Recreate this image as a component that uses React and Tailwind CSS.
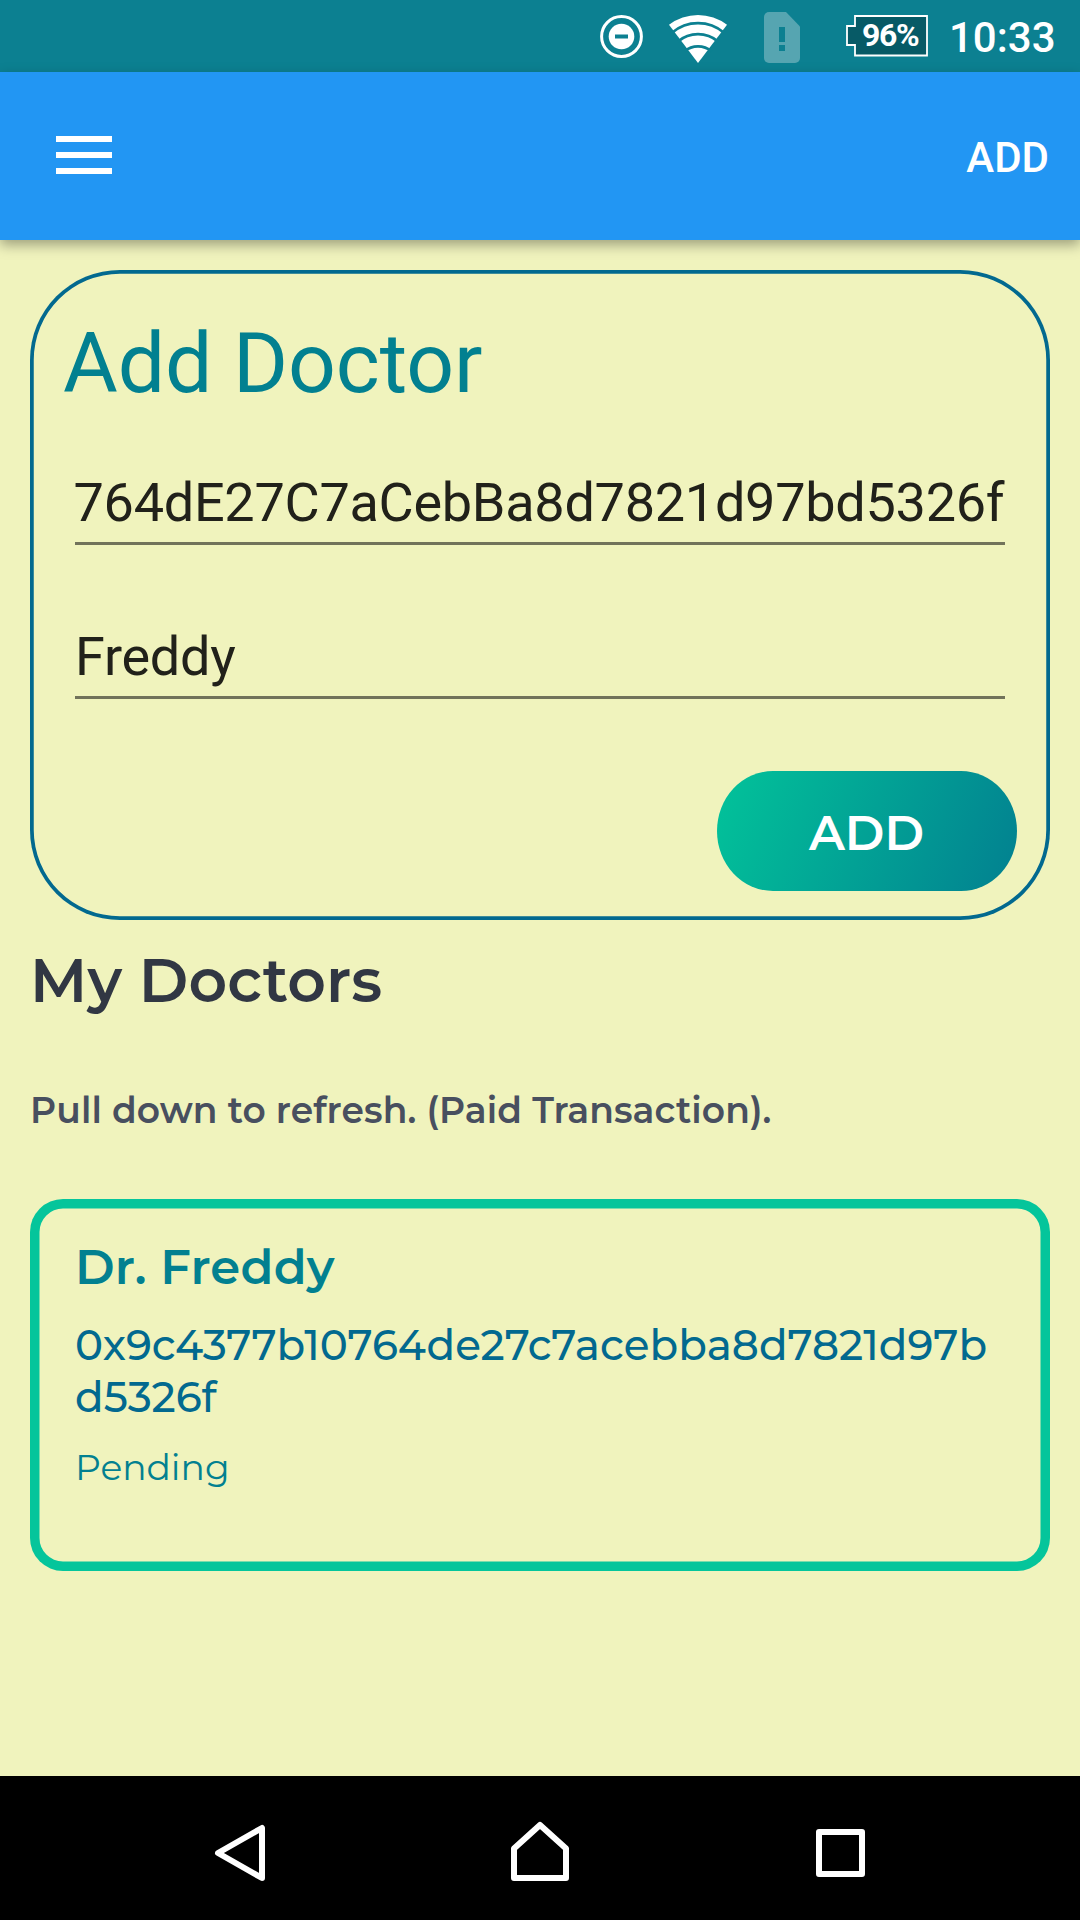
function DoNotDisturbIcon() {
  return (
    <svg className="h-[44px] w-[44px]" viewBox="0 0 44 44" fill="none">
      <circle cx="22.5" cy="22.5" r="19.9" stroke="#fff" strokeWidth="3" />
      <circle cx="22.5" cy="22.5" r="12.8" fill="#fff" />
      <rect x="16" y="20.5" width="13" height="4" fill="#0c8091" />
    </svg>
  );
}

function WifiIcon() {
  return (
    <svg className="h-[50px] w-[60px]" viewBox="0 0 60 50">
      <path d="M1 10.8A48 48 0 0 1 59 10.8L30 49Z" fill="#fff" />
      <g fill="none" stroke="#0c8091" strokeWidth="2.8">
        <path d="M4 18.7A40 40 0 0 1 56 18.7" />
        <path d="M10 27.5A31 31 0 0 1 50 27.5" />
        <path d="M16.5 37.2A21 21 0 0 1 43.5 37.2" />
      </g>
    </svg>
  );
}

function SimAlertIcon() {
  return (
    <svg className="h-[51px] w-[36px]" viewBox="0 0 36 51">
      <path d="M5 0H22L36 14.5V46a5 5 0 0 1-5 5H5a5 5 0 0 1-5-5V5a5 5 0 0 1 5-5Z" fill="#56a5b1" />
      <path d="M15 15h6v15h-6zM15 33h6v6h-6z" fill="#0c8091" />
    </svg>
  );
}

function Battery() {
  return (
    <div className="relative h-[42px] w-[82px]">
      <svg className="h-full w-full" viewBox="0 0 82 42">
        <path d="M9 1H81V40.5H9V30H1V11H9Z" fill="#075a66" stroke="#fff" strokeWidth="1.8" />
      </svg>
      <span className="absolute top-[-1px] left-[16px] text-[32px] leading-[42px] font-bold tracking-[-1.3px]">
        96%
      </span>
    </div>
  );
}

function StatusBar() {
  return (
    <div className="flex h-[72px] shrink-0 items-start justify-end bg-[#0c8091] pr-[23px] text-white">
      <div className="mt-[14px]"><DoNotDisturbIcon /></div>
      <div className="mt-[14px] ml-[25px]"><WifiIcon /></div>
      <div className="mt-[12px] ml-9"><SimAlertIcon /></div>
      <div className="mt-[15px] ml-[46px]"><Battery /></div>
      <span className="ml-[21px] w-[108px] text-[42px] leading-[75px] font-medium">10:33</span>
    </div>
  );
}

function AppBar() {
  return (
    <div className="z-10 flex h-[168px] shrink-0 items-center justify-between bg-[#2296f3] pr-[31px] pl-14 text-white shadow-[0_5px_12px_rgba(0,0,0,0.34)]">
      <div className="mb-[2px] flex w-14 flex-col gap-[10px]">
        <div className="h-[6px] bg-white" />
        <div className="h-[6px] bg-white" />
        <div className="h-[6px] bg-white" />
      </div>
      <span className="pt-[3px] text-[42px] leading-[48px] font-medium">ADD</span>
    </div>
  );
}

function Field({ value, className }) {
  return (
    <div
      className={`mr-[45px] ml-[45px] h-[76px] overflow-hidden border-b-[3px] border-[#71725a] text-[54px] leading-[67px] tracking-[-0.27px] whitespace-nowrap text-[#21211a] ${className}`}
    >
      {value}
    </div>
  );
}

function AddDoctorCard() {
  return (
    <section className="mt-[30px] flex h-[650px] shrink-0 flex-col rounded-[90px] pt-[44px] shadow-[inset_0_0_0_3.75px_#02698f]">
      <h1 className="pl-[33px] text-[84px] leading-[100px] tracking-[-0.1px] text-[#028090]">Add Doctor</h1>
      <Field value="764dE27C7aCebBa8d7821d97bd5326f" className="mt-[55px] indent-[-1.5px]" />
      <Field value="Freddy" className="mt-[78px]" />
      <button className="mt-[72px] mr-[33px] flex h-[120px] w-[300px] items-center justify-center self-end rounded-[56px/60px] bg-[linear-gradient(112deg,#02c39a,#028090)] pt-[3px] pr-[1px] font-[Montserrat,sans-serif] text-[48px] leading-[60px] font-semibold text-white">
        ADD
      </button>
    </section>
  );
}

function DoctorCard({ name, address, status }) {
  return (
    <section className="mt-[67px] h-[372px] shrink-0 rounded-[33px] px-[45px] pt-[38px] shadow-[inset_0_0_0_9.5px_#05c59b]">
      <h3 className="text-[48px] leading-[60px] font-semibold tracking-[0.22px] text-[#028090]">{name}</h3>
      <p className="mt-[22px] text-[42px] leading-[52px] font-medium tracking-[0.05px] break-all text-[#02698f]">
        {address}
      </p>
      <p className="mt-[22px] text-[36px] leading-[44px] text-[#028090]">{status}</p>
    </section>
  );
}

function NavBar() {
  return (
    <div className="flex h-[144px] shrink-0 items-start bg-black">
      <svg className="mt-[46px] ml-[214px] h-[62px] w-[54px]" viewBox="0 0 54 62" fill="none" stroke="#fff" strokeWidth="6" strokeLinejoin="round">
        <path d="M48 6V56L4 31Z" />
      </svg>
      <svg className="mt-[44px] ml-[242px] h-[64px] w-[60px]" viewBox="0 0 60 64" fill="none" stroke="#fff" strokeWidth="6" strokeLinejoin="round">
        <path d="M4 58V28.5L30 5L56 28.5V58Z" />
      </svg>
      <svg className="mt-[50px] ml-[243px] h-[54px] w-[56px]" viewBox="0 0 56 54" fill="none" stroke="#fff" strokeWidth="6" strokeLinejoin="round">
        <path d="M6 6H49V48H6Z" />
      </svg>
    </div>
  );
}

export default function App() {
  return (
    <div className="flex h-[1920px] w-[1080px] flex-col overflow-hidden bg-[#f0f3bd] font-[Roboto,sans-serif]">
      <StatusBar />
      <AppBar />
      <main className="flex flex-1 flex-col px-[30px]">
        <AddDoctorCard />
        <div className="flex flex-col font-[Montserrat,sans-serif]">
          <h2 className="mt-[24px] text-[60px] leading-[74px] font-semibold tracking-[0.1px] text-[#313743]">
            My Doctors
          </h2>
          <p className="mt-[70px] text-[36px] leading-[44px] font-semibold tracking-[0.12px] text-[#484f5f]">
            Pull down to refresh. (Paid Transaction).
          </p>
          <DoctorCard
            name="Dr. Freddy"
            address="0x9c4377b10764de27c7acebba8d7821d97bd5326f"
            status="Pending"
          />
        </div>
      </main>
      <NavBar />
    </div>
  );
}
